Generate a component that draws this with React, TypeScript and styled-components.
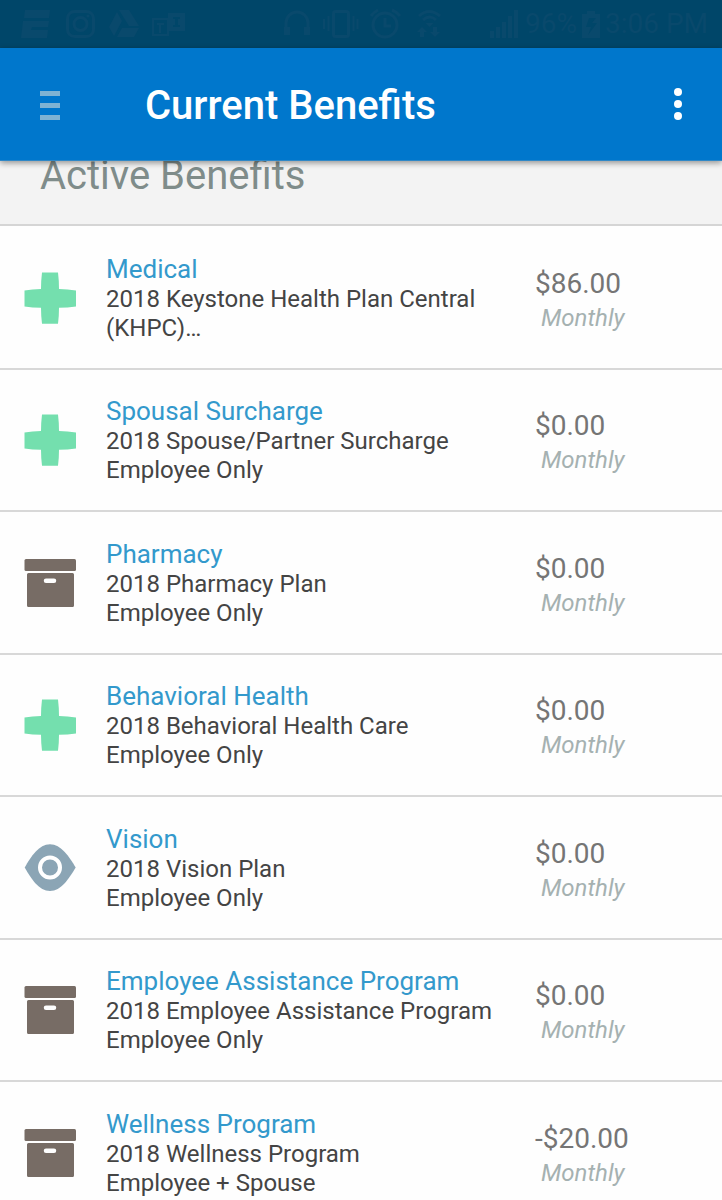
import React from "react";
import styled, { createGlobalStyle } from "styled-components";

const GlobalStyle = createGlobalStyle`
  * { box-sizing: border-box; }
  body { margin: 0; background: #fefefe; font-family: Roboto, "Noto Sans", sans-serif; }
  h1, h2, p, ul { margin: 0; padding: 0; font-weight: 400; }
`;

const Screen = styled.div`
  display: flex;
  flex-direction: column;
  height: 100vh;
`;

const StatusBar = styled.div`
  flex: none;
  display: flex;
  align-items: center;
  justify-content: space-between;
  height: 48px;
  padding: 0 14px 0 20px;
  background: #004669;
  color: #09496c;
`;

const StatusGroup = styled.div<{ $gap: number }>`
  display: flex;
  align-items: center;
  gap: ${(p) => p.$gap}px;
`;

const StatusText = styled.span`
  font-size: 28px;
  line-height: 32px;
`;

const AppBar = styled.header`
  flex: none;
  position: relative;
  z-index: 1;
  display: flex;
  align-items: center;
  height: 113px;
  padding: 0 20px 0 26px;
  background: #0077cc;
  border-bottom: 1px solid #2f87c6;
  box-shadow: 0 2px 6px rgba(0, 0, 0, 0.4);
`;

const BarButton = styled.button`
  display: flex;
  align-items: center;
  justify-content: center;
  width: 48px;
  height: 48px;
  padding: 0;
  border: 0;
  background: none;
  color: #fff;
`;

const MenuButton = styled(BarButton)`
  padding-top: 4px;
  color: #7fb3d3;
`;

const Title = styled.h1`
  flex: 1;
  padding: 4px 0 0 71px;
  color: #fff;
  font-size: 40px;
  font-weight: 500;
  line-height: 50px;
`;

const Content = styled.main`
  flex: 1;
  min-height: 0;
  overflow-y: auto;
  scrollbar-width: none;
`;

const SectionTitle = styled.h2`
  height: 65px;
  padding: 0 40px;
  background: #f3f3f3;
  border-bottom: 2px solid #d5d5d5;
  color: #7f8c8a;
  font-size: 40px;
  line-height: 30px;
`;

const BenefitList = styled.ul`
  padding-top: 1px;
  list-style: none;
`;

const BenefitRow = styled.li`
  display: flex;
  align-items: center;
  height: 143px;
  padding-left: 24px;
  border-bottom: 2px solid #d8d8d8;

  &:nth-child(even) { height: 142px; }
`;

const Details = styled.div`
  flex: 1;
  padding: 1px 24px 0 30px;
`;

const BenefitLink = styled.a`
  display: block;
  color: #3399cc;
  font-size: 26px;
  line-height: 31px;
  text-decoration: none;
`;

const Plan = styled.p`
  color: #444;
  font-size: 24px;
  line-height: 29px;
`;

const Cost = styled.div`
  width: 187px;
  padding-top: 6px;
`;

const Amount = styled.p`
  color: #757575;
  font-size: 28px;
  line-height: 34px;
`;

const Period = styled.p`
  padding-left: 6px;
  color: #a5b1b1;
  font-size: 24px;
  font-style: italic;
  line-height: 34px;
`;

const IconSvg = styled.svg`
  flex: none;
  display: block;
`;

type IconKind = "plus" | "box" | "eye";

function BenefitIcon({ kind }: { kind: IconKind }) {
  return (
    <IconSvg width="52" height="52" viewBox="0 0 52 52" aria-hidden="true">
      {kind === "plus" && (
        <path
          fill="#74dfae"
          d="M18 .5h16q1 8 1 16.500q8.500 0 17 1.500v16q-8.500 1.200-17 1.200q0 8.500-1 16H18q-1-7.500-1-16q-8.500 0-16.500-1.200v-16q8-1.500 16.500-1.500q0-8.500 1-16.500z"
        />
      )}
      {kind === "box" && (
        <>
          <rect x="0.500" y="2" width="51.500" height="12" rx="1.500" fill="#776c65" />
          <path
            fill="#776c65"
            fillRule="evenodd"
            d="M4.500 16h44q1.500 0 1.500 1.500v31q0 1.500-1.500 1.500h-44q-1.500 0-1.500-1.500v-31q0-1.500 1.500-1.500zM22 21.500a2.200 2.200 0 0 0 0 4.500h8a2.200 2.200 0 0 0 0-4.500z"
          />
        </>
      )}
      {kind === "eye" && (
        <>
          <path
            fill="#8ba5b5"
            d="M.7 25.500C7 14.500 15 2.300 26 2.300S45 14.500 51.700 25.500C45 36.500 37 49 26 49S7 36.500.7 25.500z"
          />
          <circle cx="26" cy="25.500" r="10" fill="none" stroke="#fff" strokeWidth="4" />
        </>
      )}
    </IconSvg>
  );
}

function NotificationIcons() {
  return (
    <IconSvg width="168" height="32" viewBox="20 8 168 32" fill="currentColor" aria-hidden="true">
      <path d="M25 10h25l-1 8H24zM23 21h26l-1 6H32l-1 3h17l-1 8H21z" />
      <g fill="none" stroke="currentColor" strokeWidth="3">
        <rect x="67.500" y="11.500" width="26" height="25" rx="7" />
        <circle cx="80.500" cy="24" r="6.500" />
      </g>
      <circle cx="88" cy="16" r="1.500" />
      <path d="M119 10h10l10 16h-10zM117 12l5 9-8 15-5-9zM122 28h17l-5 9h-17z" />
      <rect x="153" y="19" width="15" height="16" fill="none" stroke="currentColor" strokeWidth="2" />
      <path d="M157 23h7v2h-3v8h-2v-8h-2z" />
      <path fillRule="evenodd" d="M168 13h17v18h-17zM173 17v2h2v6h-2v2h7v-2h-2v-6h2v-2z" />
    </IconSvg>
  );
}

function DeviceIcons() {
  return (
    <IconSvg width="160" height="32" viewBox="282 8 160 32" fill="none" stroke="currentColor" strokeWidth="3" aria-hidden="true">
      <path d="M286 30v-7a11 11 0 0 1 22 0v7" />
      <path d="M287 27v8M307 27v8" strokeWidth="6" />
      <rect x="333.500" y="11.500" width="15" height="25" rx="2" />
      <path d="M324 19v10M328.500 16v15M353.500 16v15M357.500 19v10" strokeWidth="2" />
      <circle cx="385" cy="25" r="12" />
      <path d="M385 18v8h6M371 16q3-4 7-6M392 10q5 2 8 6" />
      <path d="M419 16q10-9 21 0M423 20q7-6 13 0" />
      <path d="M425.500 23h8l-4 4zM422 27l5 5h-3v5h-4v-5h-3zM435 37l-5-5h3v-5h4v5h3z" fill="currentColor" stroke="none" />
    </IconSvg>
  );
}

interface Benefit {
  name: string;
  plan: string;
  coverage?: string;
  amount: string;
  icon: IconKind;
}

const benefits: Benefit[] = [
  { name: "Medical", plan: "2018 Keystone Health Plan Central (KHPC)…", amount: "$86.00", icon: "plus" },
  { name: "Spousal Surcharge", plan: "2018 Spouse/Partner Surcharge", coverage: "Employee Only", amount: "$0.00", icon: "plus" },
  { name: "Pharmacy", plan: "2018 Pharmacy Plan", coverage: "Employee Only", amount: "$0.00", icon: "box" },
  { name: "Behavioral Health", plan: "2018 Behavioral Health Care", coverage: "Employee Only", amount: "$0.00", icon: "plus" },
  { name: "Vision", plan: "2018 Vision Plan", coverage: "Employee Only", amount: "$0.00", icon: "eye" },
  { name: "Employee Assistance Program", plan: "2018 Employee Assistance Program", coverage: "Employee Only", amount: "$0.00", icon: "box" },
  { name: "Wellness Program", plan: "2018 Wellness Program", coverage: "Employee + Spouse", amount: "-$20.00", icon: "box" },
];

export default function App() {
  return (
    <Screen>
      <GlobalStyle />
      <StatusBar>
        <NotificationIcons />
        <StatusGroup $gap={48}>
          <DeviceIcons />
          <StatusGroup $gap={5}>
            <IconSvg width="30" height="28" viewBox="0 0 30 28" fill="currentColor" aria-hidden="true">
              <path d="M0 21h4v7H0zM6 17h4v11H6zM12 12h4v16h-4zM18 6h4v22h-4zM24 0h4v28h-4z" />
            </IconSvg>
            <StatusText>96%</StatusText>
            <IconSvg width="18" height="28" viewBox="0 0 18 28" fill="currentColor" aria-hidden="true">
              <path fillRule="evenodd" d="M5 1h8v3h5v24H0V4h5zM7 8L4 17h5l-3 8 9-12H10l4-5z" />
            </IconSvg>
            <StatusText>3:06 PM</StatusText>
          </StatusGroup>
        </StatusGroup>
      </StatusBar>
      <AppBar>
        <MenuButton type="button" aria-label="Open menu">
          <svg width="20" height="30" viewBox="0 0 20 30" fill="currentColor">
            <path d="M0 0h20v5H0zM0 12h20v5H0zM0 24h20v5H0z" />
          </svg>
        </MenuButton>
        <Title>Current Benefits</Title>
        <BarButton type="button" aria-label="More options">
          <svg width="8" height="32" viewBox="0 0 8 32" fill="currentColor">
            <circle cx="4" cy="4" r="4" />
            <circle cx="4" cy="16" r="4" />
            <circle cx="4" cy="28" r="4" />
          </svg>
        </BarButton>
      </AppBar>
      <Content>
        <SectionTitle>Active Benefits</SectionTitle>
        <BenefitList>
          {benefits.map((b) => (
            <BenefitRow key={b.name}>
              <BenefitIcon kind={b.icon} />
              <Details>
                <BenefitLink href="#">{b.name}</BenefitLink>
                <Plan>{b.plan}</Plan>
                {b.coverage && <Plan>{b.coverage}</Plan>}
              </Details>
              <Cost>
                <Amount>{b.amount}</Amount>
                <Period>Monthly</Period>
              </Cost>
            </BenefitRow>
          ))}
        </BenefitList>
      </Content>
    </Screen>
  );
}
